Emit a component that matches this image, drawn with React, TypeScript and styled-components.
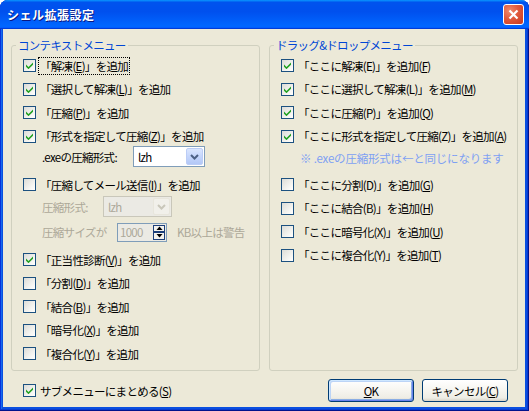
import React from "react";
import styled, { createGlobalStyle, css } from "styled-components";

const FONT = `"Noto Sans CJK JP", "Noto Sans", sans-serif`;

const Global = createGlobalStyle`
  html, body { margin: 0; padding: 0; background: #ffffff; }
  body { font-family: ${FONT}; font-size: 11.5px; letter-spacing: -0.7px; }
`;

const Window = styled.div`
  width: 529px;
  height: 411px;
  box-sizing: border-box;
  display: flex;
  flex-direction: column;
  background: #0a4fe0;
  border-radius: 8px 8px 0 0;
  overflow: hidden;
  box-shadow: inset -1px -1px #00138c, inset 1px 0 #0831d9, inset -2px -2px #0a3bd0,
    inset 2px 0 #166aee;
`;

const TitleBar = styled.div`
  height: 29px;
  flex: none;
  display: flex;
  align-items: center;
  justify-content: space-between;
  padding: 0 5px 0 7px;
  background: linear-gradient(
    180deg,
    #0997ff,
    #0053ee 8%,
    #0050ee 40%,
    #0066ff 88%,
    #0066ff 93%,
    #005bff 95%,
    #003dd7 96%,
    #003dd7
  );
`;

const Title = styled.span`
  color: #ffffff;
  font-weight: bold;
  font-size: 12px;
  letter-spacing: 0.5px;
  line-height: 14px;
  text-shadow: 1px 1px #0a1883;
`;

const CloseButton = styled.div`
  width: 21px;
  height: 21px;
  box-sizing: border-box;
  border: 1px solid #ffffff;
  border-radius: 3px;
  background: radial-gradient(circle at 30% 30%, #f08a6c 0%, #e0593c 45%, #c8381f 100%);
  display: flex;
  align-items: center;
  justify-content: center;
`;

const Client = styled.div`
  flex: 1;
  margin: 0 4px 4px 3px;
  background: #ece9d8;
  padding: 9px 7px 0 8px;
  display: flex;
  flex-direction: column;
`;

const Groups = styled.div`
  display: grid;
  grid-template-columns: 249px 249px;
  column-gap: 9px;
`;

const Group = styled.fieldset`
  margin: 0;
  padding: 0;
  min-width: 0;
  height: 333px;
  box-sizing: border-box;
  border: 1px solid #d0d0bf;
  border-radius: 3px;
`;

const Legend = styled.legend`
  margin-left: 4px;
  padding: 0 2px;
  color: #0046d5;
  line-height: 14px;
`;

const List = styled.div`
  display: flex;
  flex-direction: column;
  padding: 2px 0 0 11px;
`;

const CheckRow = styled.div<{ $gapTop?: number }>`
  height: 23.5px;
  flex: none;
  display: flex;
  align-items: center;
  gap: 2px;
  margin-top: ${(p) => p.$gapTop ?? 0}px;
`;

const Box = styled.span`
  width: 13px;
  height: 13px;
  flex: none;
  box-sizing: border-box;
  border: 1px solid #1c5180;
  background: linear-gradient(135deg, #dcdcd7 0%, #f6f6f3 70%, #ffffff 100%);
  display: flex;
  align-items: center;
  justify-content: center;
`;

const LabelText = styled.span<{ $focus?: boolean; $disabled?: boolean }>`
  line-height: 14px;
  padding: 1px 1px;
  border: 1px dotted ${(p) => (p.$focus ? "#000000" : "transparent")};
  color: ${(p) => (p.$disabled ? "#aca899" : "#000000")};
  white-space: nowrap;
`;

const U = styled.span`
  text-decoration: underline;
  text-underline-offset: 1px;
`;

const SubRow = styled.div<{ $h: number; $gapTop: number }>`
  height: ${(p) => p.$h}px;
  margin-top: ${(p) => p.$gapTop}px;
  flex: none;
  display: flex;
  align-items: center;
  padding-left: 19px;
`;

const SubLabel = styled.span<{ $w: number; $disabled?: boolean }>`
  width: ${(p) => p.$w}px;
  flex: none;
  line-height: 14px;
  white-space: nowrap;
  color: ${(p) => (p.$disabled ? "#aca899" : "#000000")};
`;

const Combo = styled.div<{ $w: number; $disabled?: boolean }>`
  width: ${(p) => p.$w}px;
  height: 21px;
  box-sizing: border-box;
  flex: none;
  border: 1px solid ${(p) => (p.$disabled ? "#c9c7ba" : "#7f9db9")};
  background: ${(p) => (p.$disabled ? "#ebeae4" : "#ffffff")};
  display: flex;
  align-items: center;
  justify-content: space-between;
  padding: 1px;
`;

const ComboText = styled.span<{ $disabled?: boolean }>`
  padding-left: 3px;
  line-height: 14px;
  color: ${(p) => (p.$disabled ? "#aca899" : "#000000")};
`;

const ComboButton = styled.span<{ $disabled?: boolean }>`
  width: 17px;
  height: 17px;
  box-sizing: border-box;
  border-radius: 2px;
  display: flex;
  align-items: center;
  justify-content: center;
  ${(p) =>
    p.$disabled
      ? css`
          border: 1px solid #e8e6dc;
          background: #f1f0ea;
        `
      : css`
          border: 1px solid #bccdf6;
          background: linear-gradient(180deg, #dbe6fe 0%, #c5d6fc 50%, #b3c8f6 100%);
        `}
`;

const SpinInput = styled.div`
  width: 36px;
  height: 19px;
  box-sizing: border-box;
  border: 1px solid #7f9db9;
  border-right: none;
  background: #ebeae4;
  color: #aca899;
  line-height: 14px;
  padding-left: 2px;
  display: flex;
  align-items: center;
`;

const Spinner = styled.div`
  width: 14px;
  height: 19px;
  box-sizing: border-box;
  border: 1px solid #7f9db9;
  border-left: none;
  display: flex;
  flex-direction: column;
  background: #ebeae4;
  padding: 1px 1px 1px 0;
`;

const SpinHalf = styled.span`
  flex: 1;
  box-sizing: border-box;
  border: 1px solid #1c3f7a;
  background: #f4f3ee;
  display: flex;
  align-items: center;
  justify-content: center;
`;

const After = styled.span`
  margin-left: 10px;
  color: #aca899;
  line-height: 14px;
  white-space: nowrap;
`;

const Note = styled.div`
  height: 20px;
  flex: none;
  display: flex;
  align-items: center;
  padding-left: 19px;
  color: #7ea0f3;
  line-height: 14px;
  letter-spacing: -0.2px;
  white-space: nowrap;
`;

const Bottom = styled.div`
  margin-top: 8px;
  height: 23px;
  display: flex;
  align-items: center;
  padding-left: 12px;
  padding-right: 10px;
`;

const BottomCheck = styled.div`
  display: flex;
  align-items: center;
  gap: 2px;
  flex: 1;
`;

const Buttons = styled.div`
  display: flex;
  gap: 8px;
`;

const Button = styled.button<{ $default?: boolean }>`
  width: 86px;
  height: 23px;
  box-sizing: border-box;
  border: 1px solid #003c74;
  border-radius: 3px;
  padding: 0;
  font-family: ${FONT};
  font-size: 11.5px;
  font-weight: 400;
  letter-spacing: -0.7px;
  line-height: 14px;
  color: #000000;
  background: linear-gradient(180deg, #ffffff 0%, #f7f6f1 45%, #eeede5 85%, #d8d2c6 100%);
  ${(p) =>
    p.$default &&
    css`
      box-shadow: inset 1px 1px #cee7ff, inset -1px -1px #6982ee, inset 2px 2px #bcd4f6,
        inset -2px -2px #89ade4;
    `}
`;

const Check = () => (
  <svg width="7" height="7" viewBox="0 0 7 7">
    <polygon points="0,2.5 2.5,5 7,0.5 7,2.7 2.5,7.2 0,4.7" fill="#21a121" />
  </svg>
);

const Chevron = ({ color }: { color: string }) => (
  <svg width="9" height="6" viewBox="0 0 9 6">
    <polyline points="1,1 4.5,4.5 8,1" fill="none" stroke={color} strokeWidth="2" />
  </svg>
);

const Tri = ({ up }: { up?: boolean }) => (
  <svg width="7" height="4" viewBox="0 0 7 4">
    <polygon points={up ? "0.5,4 3.5,0.5 6.5,4" : "0.5,0 3.5,3.5 6.5,0"} fill="#000000" />
  </svg>
);

type Item = { pre: string; key: string; post: string; checked: boolean };

const CheckBox = ({ checked }: { checked: boolean }) => <Box>{checked && <Check />}</Box>;

const Row = ({
  checked,
  children,
  focus,
  gapTop,
}: {
  checked: boolean;
  children: React.ReactNode;
  focus?: boolean;
  gapTop?: number;
}) => (
  <CheckRow $gapTop={gapTop}>
    <CheckBox checked={checked} />
    <LabelText $focus={focus}>{children}</LabelText>
  </CheckRow>
);

const leftTail: Item[] = [
  { pre: "「正当性診断(", key: "V", post: ")」を追加", checked: true },
  { pre: "「分割(", key: "D", post: ")」を追加", checked: false },
  { pre: "「結合(", key: "B", post: ")」を追加", checked: false },
  { pre: "「暗号化(", key: "X", post: ")」を追加", checked: false },
  { pre: "「複合化(", key: "Y", post: ")」を追加", checked: false },
];

const rightTop = [
  { text: "「ここに解凍(E)」を追加(", key: "F" },
  { text: "「ここに選択して解凍(L)」を追加(", key: "M" },
  { text: "「ここに圧縮(P)」を追加(", key: "Q" },
  { text: "「ここに形式を指定して圧縮(Z)」を追加(", key: "A" },
];

const rightBottom = [
  { text: "「ここに分割(D)」を追加(", key: "G" },
  { text: "「ここに結合(B)」を追加(", key: "H" },
  { text: "「ここに暗号化(X)」を追加(", key: "U" },
  { text: "「ここに複合化(Y)」を追加(", key: "T" },
];

export default function App() {
  return (
    <>
      <Global />
      <Window>
        <TitleBar>
          <Title>シェル拡張設定</Title>
          <CloseButton>
            <svg width="11" height="11" viewBox="0 0 11 11">
              <path d="M1.5 1.5 L9.5 9.5 M9.5 1.5 L1.5 9.5" stroke="#ffffff" strokeWidth="2.2" />
            </svg>
          </CloseButton>
        </TitleBar>
        <Client>
          <Groups>
            <Group>
              <Legend>コンテキストメニュー</Legend>
              <List>
                <Row checked focus>
                  「解凍(<U>E</U>)」を追加
                </Row>
                <Row checked>
                  「選択して解凍(<U>L</U>)」を追加
                </Row>
                <Row checked>
                  「圧縮(<U>P</U>)」を追加
                </Row>
                <Row checked>
                  「形式を指定して圧縮(<U>Z</U>)」を追加
                </Row>
                <SubRow $h={21} $gapTop={-2}>
                  <SubLabel $w={91}>.exeの圧縮形式:</SubLabel>
                  <Combo $w={72}>
                    <ComboText>lzh</ComboText>
                    <ComboButton>
                      <Chevron color="#4d6185" />
                    </ComboButton>
                  </Combo>
                </SubRow>
                <Row checked={false} gapTop={6}>
                  「圧縮してメール送信(<U>I</U>)」を追加
                </Row>
                <SubRow $h={20} $gapTop={0}>
                  <SubLabel $w={61} $disabled>
                    圧縮形式:
                  </SubLabel>
                  <Combo $w={69} $disabled>
                    <ComboText $disabled>lzh</ComboText>
                    <ComboButton $disabled>
                      <Chevron color="#c9c7ba" />
                    </ComboButton>
                  </Combo>
                </SubRow>
                <SubRow $h={19} $gapTop={6}>
                  <SubLabel $w={75} $disabled>
                    圧縮サイズが
                  </SubLabel>
                  <SpinInput>1000</SpinInput>
                  <Spinner>
                    <SpinHalf>
                      <Tri up />
                    </SpinHalf>
                    <SpinHalf>
                      <Tri />
                    </SpinHalf>
                  </Spinner>
                  <After>KB以上は警告</After>
                </SubRow>
                {leftTail.map((it, i) => (
                  <Row key={it.pre} checked={it.checked} gapTop={i === 0 ? 6.5 : 0}>
                    {it.pre}
                    <U>{it.key}</U>
                    {it.post}
                  </Row>
                ))}
              </List>
            </Group>
            <Group>
              <Legend>ドラッグ&amp;ドロップメニュー</Legend>
              <List>
                {rightTop.map((it) => (
                  <Row key={it.key} checked>
                    {it.text}
                    <U>{it.key}</U>)
                  </Row>
                ))}
                <Note>※ .exeの圧縮形式は←と同じになります</Note>
                {rightBottom.map((it, i) => (
                  <Row key={it.key} checked={false} gapTop={i === 0 ? 5 : 0}>
                    {it.text}
                    <U>{it.key}</U>)
                  </Row>
                ))}
              </List>
            </Group>
          </Groups>
          <Bottom>
            <BottomCheck>
              <CheckBox checked />
              <LabelText>
                サブメニューにまとめる(<U>S</U>)
              </LabelText>
            </BottomCheck>
            <Buttons>
              <Button $default>
                <U>O</U>K
              </Button>
              <Button>
                キャンセル(<U>C</U>)
              </Button>
            </Buttons>
          </Bottom>
        </Client>
      </Window>
    </>
  );
}
